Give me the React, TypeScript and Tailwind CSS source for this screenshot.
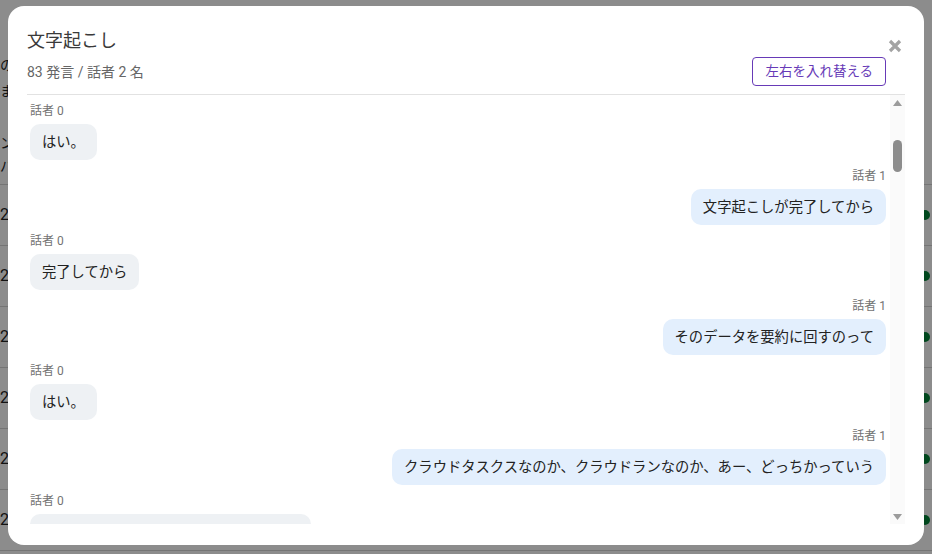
import React, { useEffect, useRef } from 'react';

type Message = {
  speaker: 0 | 1;
  text: string;
};

const opening = [
  '今日は文字起こしの件なんですけど',
  'はい、お願いします',
  '音声をアップロードしたあとに',
  'はい',
  '自動で処理が走るようにしたくて',
  'うんうん',
];

const current = [
  'はい。',
  '文字起こしが完了してから',
  '完了してから',
  'そのデータを要約に回すのって',
  'はい。',
  'クラウドタスクスなのか、クラウドランなのか、あー、どっちかっていう',
  'クラウドランの方がいいかなと思います',
];

const rest = [
  'そうですね',
  'ジョブとして切り出すイメージですか',
  'はい、そうです',
  'タイムアウトが気になるので',
  'なるほど',
  '長い音声だと数十分かかることもあるので',
  'うん',
  'キューに積んでおいて順番に処理する形ですね',
  'はい。',
  'リトライもそっちでやれると楽ですよね',
  'そうですね、失敗したときの通知も',
  'はい',
  'じゃあその方向で一回作ってみます',
  'お願いします',
];

const messages: Message[] = [...opening, ...current, ...Array.from({ length: 70 }, (_, i) => rest[i % rest.length])].map(
  (text, i) => ({ speaker: (i % 2) as 0 | 1, text })
);

const pageRows = ['22:10', '22:14', '22:31', '22:47', '22:58', '23:05'];

const MessageItem: React.FC<{ message: Message }> = ({ message }) => {
  const isRight = message.speaker === 1;

  return (
    <div className={`flex flex-col pb-2 ${isRight ? 'items-end' : 'items-start'}`}>
      <span className="text-xs leading-4 text-[#737373]">話者 {message.speaker}</span>
      <div
        className={`mt-[5px] max-w-[80%] rounded-[10px] px-3 py-2 text-[14.3px] leading-5 text-[#222] ${
          isRight ? 'bg-[#e3effd]' : 'bg-[#eef1f4]'
        }`}
      >
        {message.text}
      </div>
    </div>
  );
};

const ScrollBar: React.FC = () => (
  <div className="flex w-[15px] shrink-0 flex-col bg-[#fafafa]">
    <div className="flex h-[15px] items-center justify-center">
      <svg width="9" height="6" viewBox="0 0 9 6">
        <path d="M4.5 0L9 6H0z" fill="#9b9b9b" />
      </svg>
    </div>
    <div className="flex-1 pt-[30px]">
      <div className="mx-auto h-8 w-[9px] rounded-full bg-[#8c8c8c]" />
    </div>
    <div className="flex h-[15px] items-center justify-center">
      <svg width="9" height="6" viewBox="0 0 9 6">
        <path d="M0 0H9L4.5 6z" fill="#9b9b9b" />
      </svg>
    </div>
  </div>
);

export default function App() {
  const listRef = useRef<HTMLDivElement>(null);

  useEffect(() => {
    if (listRef.current) listRef.current.scrollTop = 382;
  }, []);

  return (
    <div className="relative h-[554px] w-full overflow-hidden bg-white font-[Roboto,'Noto_Sans_CJK_JP',sans-serif] text-[#222]">
      {/* 背景のページ */}
      <div className="pt-[52px] text-sm">
        <p className="leading-[26px]">のデータ</p>
        <p className="leading-[26px]">ます</p>
        <p className="mt-[28px] leading-[23px]">ンプ</p>
        <p className="leading-[23px]">パス</p>
      </div>
      <div className="mt-[6px] border-t border-[#d6d6d6]">
        {pageRows.map((time) => (
          <div key={time} className="flex h-[61px] items-center justify-between border-b border-[#d6d6d6] pr-0.5 text-base">
            <span>{time}</span>
            <span className="h-2.5 w-2.5 rounded-full bg-green-700" />
          </div>
        ))}
      </div>

      {/* モーダル */}
      <div className="absolute inset-0 flex justify-center bg-black/45 pt-1.5">
        <div className="relative flex h-[539px] w-[916px] flex-col rounded-2xl bg-white px-[19px] pb-[21px] pt-[21px]">
          <button className="absolute right-[22px] top-[33px]" aria-label="閉じる">
            <svg width="14" height="14" viewBox="0 0 14 14">
              <path d="M2 2L12 12M12 2L2 12" stroke="#a3a3a3" strokeWidth="3.2" />
            </svg>
          </button>

          <div className="border-b border-[#e2e2e2] pb-2">
            <h2 className="text-lg leading-7 text-[#3a3a3a]">文字起こし</h2>
            <div className="mt-0.5 flex items-center justify-between pr-[19px]">
              <p className="text-sm text-[#666]">83 発言 / 話者 2 名</p>
              <button className="rounded border border-[#673ab7] px-3 py-[5px] text-[13.5px] leading-[17px] text-[#673ab7]">
                左右を入れ替える
              </button>
            </div>
          </div>

          <div className="flex min-h-0 flex-1">
            <div ref={listRef} className="min-w-0 flex-1 overflow-y-auto pl-[3px] pr-1 [scrollbar-width:none]">
              {messages.map((message, i) => (
                <MessageItem key={i} message={message} />
              ))}
            </div>
            <ScrollBar />
          </div>
        </div>
      </div>
    </div>
  );
}
